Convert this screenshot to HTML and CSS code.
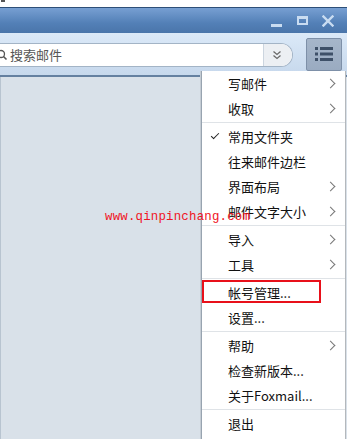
FILE: index.html
```html
<!DOCTYPE html>
<html lang="zh-CN">
<head>
  <meta charset="UTF-8" />
  <title>Foxmail</title>
  <link rel="stylesheet" href="styles.css">
</head>
<body>
  <div class="top-strip"><span class="clip-mark"></span></div>

  <header class="titlebar">
    <div class="win-btn win-min"><span></span></div>
    <div class="win-btn win-max"><span></span></div>
    <div class="win-btn win-close">
      <svg width="12" height="12" viewBox="0 0 12 12">
        <path d="M1.5 1.5 L10.5 10.5 M10.5 1.5 L1.5 10.5" stroke="#c9dcf1" stroke-width="2.4" stroke-linecap="square" />
      </svg>
    </div>
  </header>

  <div class="toolbar">
    <div class="search">
      <svg class="search-icon" width="10" height="12" viewBox="0 0 10 12">
        <circle cx="2" cy="5" r="3.5" fill="none" stroke="#555" stroke-width="1.3" />
        <path d="M4.5 7.5 L7.5 10.5" stroke="#555" stroke-width="1.6" />
      </svg>
      <span class="search-text">搜索邮件</span>
      <div class="search-drop">
        <svg width="10" height="10" viewBox="0 0 10 10">
          <path d="M1.5 1.5 L5 4.5 L8.5 1.5 M1.5 5.5 L5 8.5 L8.5 5.5" fill="none" stroke="#6a6a6a" stroke-width="1.3" />
        </svg>
      </div>
    </div>
    <div class="menu-btn">
      <svg width="18" height="14" viewBox="0 0 18 14">
        <rect x="0" y="0" width="3" height="3" fill="#3e5068" />
        <rect x="5" y="0" width="13" height="3" fill="#3e5068" />
        <rect x="0" y="5.5" width="3" height="3" fill="#3e5068" />
        <rect x="5" y="5.5" width="13" height="3" fill="#3e5068" />
        <rect x="0" y="11" width="3" height="3" fill="#3e5068" />
        <rect x="5" y="11" width="13" height="3" fill="#3e5068" />
      </svg>
    </div>
  </div>

  <div class="main-content"></div>

  <ul class="dropdown">
    <li class="item sub">写邮件</li>
    <li class="item sub">收取</li>
    <li class="sep"></li>
    <li class="item checked">常用文件夹</li>
    <li class="item">往来邮件边栏</li>
    <li class="item sub">界面布局</li>
    <li class="item sub">邮件文字大小</li>
    <li class="sep"></li>
    <li class="item sub">导入</li>
    <li class="item sub">工具</li>
    <li class="sep"></li>
    <li class="item marked">帐号管理...</li>
    <li class="item">设置...</li>
    <li class="sep"></li>
    <li class="item sub">帮助</li>
    <li class="item">检查新版本...</li>
    <li class="item">关于Foxmail...</li>
    <li class="sep"></li>
    <li class="item">退出</li>
  </ul>

  <div class="watermark">www.qinpinchang.com</div>
</body>
</html>
```

FILE: styles.css
```css
body {
  margin: 0;
  width: 347px;
  height: 439px;
  overflow: hidden;
  position: relative;
  background: #ffffff;
  font-family: "Noto Sans CJK SC", "Noto Sans", sans-serif;
  display: flex;
  flex-direction: column;
}

.top-strip {
  height: 7px;
  background: #ffffff;
}
.clip-mark {
  display: block;
  width: 4px;
  height: 2px;
  margin-left: 1px;
  background: #555;
}

.titlebar {
  height: 25px;
  border-top: 1px solid #2d4f78;
  background: linear-gradient(#779fd2, #5380b7 60%, #4a75aa);
  display: flex;
  justify-content: flex-end;
  align-items: center;
  padding-right: 13px;
  gap: 14px;
}

.win-btn {
  width: 12px;
  height: 12px;
  display: flex;
  align-items: center;
  justify-content: center;
}
.win-min span {
  width: 11px;
  height: 3px;
  margin-top: 9px;
  background: #c9dcf1;
}
.win-max span {
  width: 7px;
  height: 4px;
  border: 2px solid #c9dcf1;
  border-top-width: 3px;
}

.toolbar {
  height: 42px;
  background: linear-gradient(#dbe9f8, #c6d8ec);
  border-bottom: 2px solid #6480a0;
  display: flex;
  align-items: center;
}

.search {
  width: 292px;
  height: 22px;
  margin-top: 1px;
  background: #ffffff;
  border: 1px solid #a3b4c6;
  border-left: none;
  border-radius: 0 12px 12px 0;
  display: flex;
  align-items: center;
  overflow: hidden;
}
.search-icon {
  margin-left: -1px;
}
.search-text {
  margin-left: 1px;
  font-size: 13px;
  color: #555;
  flex: 1;
}
.search-drop {
  width: 26px;
  height: 22px;
  background: #eceff3;
  border-left: 1px solid #ccd5df;
  display: flex;
  align-items: center;
  justify-content: center;
  padding-right: 2px;
}

.menu-btn {
  width: 34px;
  height: 31px;
  margin-left: 13px;
  background: linear-gradient(#a6b6ca, #9aabc1);
  border: 1px solid #7e90a8;
  border-radius: 2px;
  display: flex;
  align-items: center;
  justify-content: center;
}

.main-content {
  flex: 1;
  background: #d9e1e9;
  border-left: 1px solid #b8c4d0;
}

.dropdown {
  position: absolute;
  top: 71px;
  left: 201px;
  width: 143px;
  height: 372px;
  margin: 0;
  padding: 0;
  list-style: none;
  background: #ffffff;
  border-left: 1px solid #98a4b0;
  border-right: 1px solid #b4b8bc;
  box-shadow: -1px 0 0 #c4ccd4;
}

.dropdown .item {
  height: 25px;
  line-height: 25px;
  padding-left: 26px;
  font-size: 13px;
  color: #111;
  position: relative;
}
.dropdown .sub::after {
  content: "";
  position: absolute;
  right: 11px;
  top: 9px;
  width: 6px;
  height: 6px;
  border-top: 1px solid #777;
  border-right: 1px solid #777;
  transform: rotate(45deg);
}
.dropdown .checked::before {
  content: "";
  position: absolute;
  left: 9px;
  top: 9px;
  width: 7px;
  height: 3px;
  border-left: 1.5px solid #222;
  border-bottom: 1.5px solid #222;
  transform: rotate(-45deg);
}
.dropdown .marked::before {
  content: "";
  position: absolute;
  left: 0;
  top: 0;
  width: 115px;
  height: 19px;
  border: 2px solid #e8101a;
}
.dropdown .sep {
  height: 1px;
  margin: 1px 0;
  background: #dfe3e7;
}

.watermark {
  position: absolute;
  left: 105px;
  top: 210px;
  font-family: "Liberation Mono", monospace;
  font-size: 12.4px;
  letter-spacing: 0.2px;
  color: #f0141e;
}
```
